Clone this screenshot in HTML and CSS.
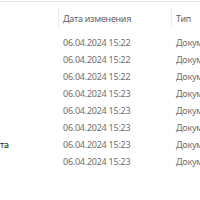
FILE: index.html
```html
<!DOCTYPE html>
<html>
<head>
<meta charset="utf-8">
<link rel="stylesheet" href="styles.css">
</head>
<body>
<div class="pane">
  <div class="topline"></div>
  <div class="header">
    <div class="hcell name"></div>
    <div class="hcell sep">Дата изменения</div>
    <div class="hcell sep">Тип</div>
  </div>
  <div class="rows">
    <div class="row"><div class="c name"></div><div class="c date">06.04.2024 15:22</div><div class="c type">Документ</div></div>
    <div class="row"><div class="c name"></div><div class="c date">06.04.2024 15:22</div><div class="c type">Документ</div></div>
    <div class="row"><div class="c name"></div><div class="c date">06.04.2024 15:22</div><div class="c type">Документ</div></div>
    <div class="row"><div class="c name"></div><div class="c date">06.04.2024 15:23</div><div class="c type">Документ</div></div>
    <div class="row"><div class="c name"></div><div class="c date">06.04.2024 15:23</div><div class="c type">Документ</div></div>
    <div class="row"><div class="c name"></div><div class="c date">06.04.2024 15:23</div><div class="c type">Документ</div></div>
    <div class="row"><div class="c name nm">та</div><div class="c date">06.04.2024 15:23</div><div class="c type">Документ</div></div>
    <div class="row"><div class="c name"></div><div class="c date">06.04.2024 15:23</div><div class="c type">Документ</div></div>
  </div>
</div>
</body>
</html>
```
FILE: styles.css
```css
html, body {
  margin: 0;
  padding: 0;
  background: #ffffff;
}
.pane {
  width: 200px;
  height: 200px;
  overflow: hidden;
  font-family: "Segoe UI", "Noto Sans", sans-serif;
  font-size: 9px;
  letter-spacing: -0.25px;
}
.topline {
  height: 1px;
  margin-top: 1px;
  background: #e6e6e6;
}
.header {
  display: grid;
  grid-template-columns: 58px 113px 1fr;
  margin-top: 6px;
  height: 20px;
}
.hcell {
  display: flex;
  align-items: center;
  padding-left: 4px;
  color: #5f5f5f;
  white-space: nowrap;
  overflow: hidden;
}
.hcell.sep {
  border-left: 1px solid #ececec;
}
.rows {
  margin-top: 6px;
}
.row {
  display: grid;
  grid-template-columns: 58px 113px 1fr;
  height: 17px;
}
.c {
  display: flex;
  align-items: center;
  padding-left: 5px;
  white-space: nowrap;
  overflow: hidden;
}
.c.name {
  padding-left: 0;
  color: #1a1a1a;
}
.c.date {
  color: #6e6e6e;
}
.c.type {
  color: #6e6e6e;
}
```
